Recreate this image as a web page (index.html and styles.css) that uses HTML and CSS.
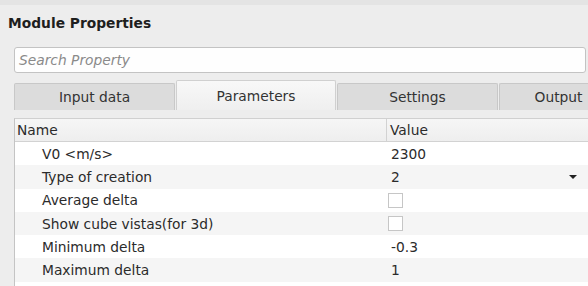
FILE: index.html
```html
<!DOCTYPE html>
<html>
<head>
<meta charset="utf-8">
<link rel="stylesheet" href="styles.css">
</head>
<body>
<div class="panel">
  <div class="topstrip"></div>
  <div class="title">Module Properties</div>
  <div class="search"><span class="placeholder">Search Property</span></div>
  <div class="tabs">
    <div class="tab">Input data</div>
    <div class="tab active">Parameters</div>
    <div class="tab">Settings</div>
    <div class="tab last">Output</div>
  </div>
  <div class="table">
    <div class="row head">
      <div class="c1">Name</div>
      <div class="c2">Value</div>
    </div>
    <div class="row">
      <div class="c1 ind">V0 &lt;m/s&gt;</div>
      <div class="c2">2300</div>
    </div>
    <div class="row alt">
      <div class="c1 ind">Type of creation</div>
      <div class="c2 combo"><span>2</span><span class="arrow"></span></div>
    </div>
    <div class="row">
      <div class="c1 ind">Average delta</div>
      <div class="c2"><span class="check"></span></div>
    </div>
    <div class="row alt">
      <div class="c1 ind">Show cube vistas(for 3d)</div>
      <div class="c2"><span class="check"></span></div>
    </div>
    <div class="row">
      <div class="c1 ind">Minimum delta</div>
      <div class="c2">-0.3</div>
    </div>
    <div class="row alt">
      <div class="c1 ind">Maximum delta</div>
      <div class="c2">1</div>
    </div>
    <div class="row">
      <div class="c1 ind"></div>
      <div class="c2"></div>
    </div>
  </div>
</div>
</body>
</html>
```
FILE: styles.css
```css
html, body {
  margin: 0;
  padding: 0;
  background: #ededed;
  overflow: hidden;
}
.panel {
  width: 588px;
  height: 286px;
  font-family: "DejaVu Sans", sans-serif;
  font-size: 13.8px;
  color: #2b2b2b;
  display: flex;
  flex-direction: column;
  overflow: hidden;
}
.panel > * {
  flex-shrink: 0;
}
.topstrip {
  height: 5px;
  background: #e4e4e4;
}
.title {
  font-weight: bold;
  font-size: 13.8px;
  color: #1e1e1e;
  padding: 8px 0 0 8px;
  height: 35px;
  line-height: 20px;
  box-sizing: border-box;
}
.search {
  margin: 7px 2px 0 14px;
  height: 26px;
  box-sizing: border-box;
  border: 1px solid #c3c3c3;
  border-radius: 3px;
  background: #fefefe;
  display: flex;
  align-items: center;
  padding-left: 4px;
}
.placeholder {
  font-style: italic;
  color: #8a8a8a;
}
.tabs {
  margin: 7px 0 0 14px;
  display: flex;
  align-items: flex-end;
  height: 30px;
}
.tab {
  flex-shrink: 0;
  width: 161px;
  height: 27px;
  background: #dcdcdc;
  border: 1px solid #c8c8c8;
  border-bottom: none;
  border-radius: 2px 2px 0 0;
  box-sizing: border-box;
  display: flex;
  align-items: center;
  justify-content: center;
  color: #333;
  margin-right: 1px;
}
.tab.active {
  height: 30px;
  background: linear-gradient(#f8f8f8, #efefef);
  border-color: #d0d0d0;
  width: 160px;
}
.tab.last {
  width: 118px;
  margin-right: 0;
  border-right: none;
  border-radius: 2px 0 0 0;
}
.table {
  margin: 8px 0 0 14px;
  border-left: 1px solid #c4c4c4;
  border-top: 1px solid #d0d0d0;
  background: #fff;
  flex: 1 0 auto;
}
.row {
  display: flex;
  height: 23.3px;
  align-items: center;
  background: #fff;
}
.row.alt {
  background: #f5f5f5;
}
.row.head {
  height: 22px;
  background: linear-gradient(#f6f6f6, #eeeeee);
  border-bottom: 1px solid #d2d2d2;
}
.c1 {
  width: 372px;
  padding-left: 2px;
  box-sizing: border-box;
  height: 100%;
  display: flex;
  align-items: center;
}
.head .c1 {
  border-right: 1px solid #d2d2d2;
}
.c1.ind {
  padding-left: 27px;
}
.c2 {
  flex: 1;
  padding-left: 4px;
  height: 100%;
  display: flex;
  align-items: center;
}
.head .c2 {
  padding-left: 3px;
}
.combo {
  justify-content: space-between;
  padding-right: 11px;
}
.arrow {
  width: 0;
  height: 0;
  border-left: 4px solid transparent;
  border-right: 4px solid transparent;
  border-top: 4px solid #222;
}
.check {
  width: 15px;
  height: 15px;
  box-sizing: border-box;
  border: 1px solid #c6c6c6;
  background: #fff;
  margin-left: -3px;
}
```
